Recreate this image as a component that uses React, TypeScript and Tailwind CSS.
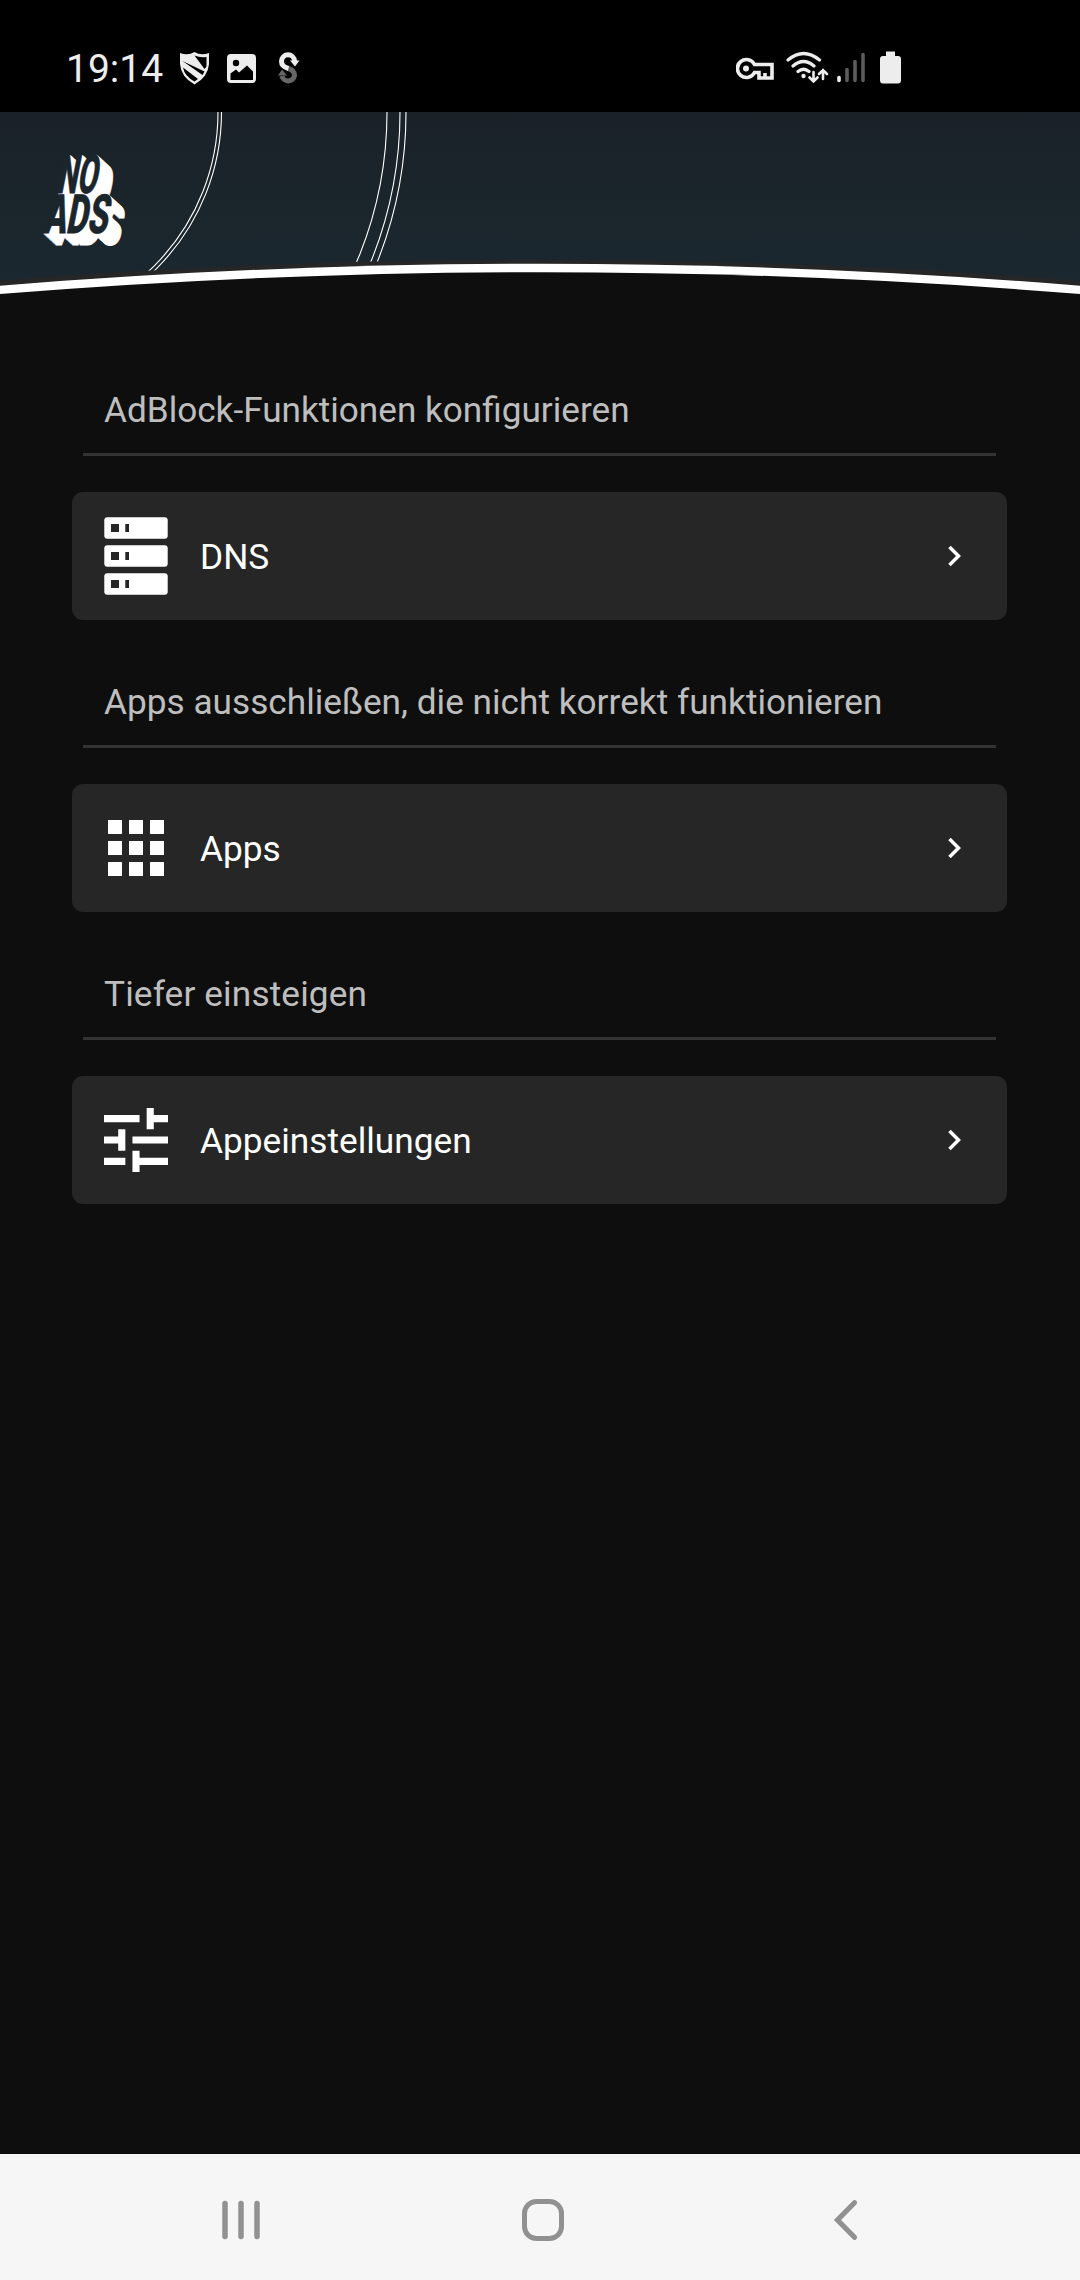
import React from "react";

const SHIFTS = [1, 2, 3, 4, 5, 6, 7, 8, 9, 10, 11, 12];

function LogoWords({ fill, strokeWidth }: { fill: string; strokeWidth: number }) {
  return (
    <g fill={fill} stroke={fill} strokeWidth={strokeWidth} fontFamily="Roboto" fontWeight="800" fontSize="54">
      <text transform="translate(56 80.500) skewX(-11)" textLength="40" lengthAdjust="spacingAndGlyphs">NO</text>
      <text transform="translate(43 120.500) skewX(-11)" textLength="64" lengthAdjust="spacingAndGlyphs">ADS</text>
    </g>
  );
}

function StatusBar() {
  return (
    <div className="flex h-[112px] shrink-0 items-start bg-black pl-[66px] text-[#ededed]">
      <div className="mt-[46px] flex h-[46px] w-[98px] items-center whitespace-nowrap text-[39px] leading-[46px]">19:14</div>
      <svg className="mt-[46px] h-[42px] w-[140px]" viewBox="164 46 140 42" fill="none">
        <path d="M180 53Q188 56 194.500 52Q201 56 209 53V64Q208 77 194.500 84.500Q181 77 180 64Z" fill="#ededed" />
        <path d="M194.500 55.500Q200 58 206.500 57V66.500L204.500 69ZM182.500 61L204.500 71.500L202.500 75ZM183 67.500L198 79L194.500 81.500Q184.500 76 183 67.500Z" fill="#000" />
        <rect x="227" y="54" width="29" height="29" rx="4" fill="#ededed" />
        <circle cx="236" cy="63" r="3.200" fill="#000" />
        <path d="M230.500 73.500L236 69.500L239 72.500L247 65.500L253 71.500V80H230.500Z" fill="#000" />
        <path d="M288 68.500Q294.500 70 294.500 75.500A6.500 6.500 0 0 1 281.800 76" stroke="#666" strokeWidth="5" />
        <path d="M278 75.500L282 69.500L287 75.500Z" fill="#666" />
        <path d="M294.500 61A6.500 6.500 0 0 0 281.500 61.500Q281.500 66.500 288.500 68.500" stroke="#ededed" strokeWidth="5" />
        <path d="M290 60.500H299.500L295 66.500Z" fill="#ededed" />
      </svg>
      <svg className="ml-[432px] mt-[46px] h-[42px] w-[170px]" viewBox="736 46 170 42" fill="none" stroke="#ededed" strokeLinecap="round">
        <path strokeLinecap="butt" strokeWidth="3.600" d="M754.500 64.500H772V78H759V72.500H754.500A9 9 0 1 1 754.500 64.500ZM765 78V73" />
        <circle cx="746" cy="68.500" r="3" fill="#ededed" stroke="none" />
        <path strokeWidth="3.200" d="M788 60Q803.500 47 819.500 60M793 66Q803.500 57 814 66M798 71.500Q803.500 67 809 71.500" />
        <circle cx="803.500" cy="76" r="2.200" fill="#ededed" stroke="none" />
        <path strokeWidth="2.600" d="M813.500 72V81M809.500 77.500L813.500 81.500L817.500 77.500M823 79V70M819 74L823 70L827 74" />
        <path strokeWidth="3.600" d="M839 77.500V80.500" />
        <path strokeWidth="3.600" stroke="#5c5c5c" d="M847 69.500V80.500M855 61.500V80.500M863 54.500V80.500" />
        <path fill="#ededed" stroke="none" d="M886 51.500H895V56H898Q901 56 901 59V80Q901 83.500 898 83.500H883Q880 83.500 880 80V59Q880 56 883 56H886Z" />
      </svg>
    </div>
  );
}

function Header() {
  return (
    <svg className="block h-[188px] w-full shrink-0" viewBox="0 0 1080 188" fill="none">
      <defs>
        <linearGradient id="sky" x1="0" y1="0" x2="0" y2="1">
          <stop offset="0" stopColor="#1a2228" />
          <stop offset="1" stopColor="#1b2830" />
        </linearGradient>
      </defs>
      <rect width="1080" height="188" fill="url(#sky)" />
      <g stroke="#fff" strokeWidth="1.100">
        <circle cx="0.500" cy="0" r="217.500" />
        <circle cx="0.500" cy="0" r="221" />
        <circle cx="0.500" cy="0" r="386.500" />
        <circle cx="0.500" cy="0" r="399.500" />
        <circle cx="0.500" cy="0" r="405.500" />
      </g>
      {SHIFTS.map((n) => (
        <g key={n} transform={`translate(${n * 1.08} ${n})`}>
          <LogoWords fill="#fff" strokeWidth={1} />
        </g>
      ))}
      <LogoWords fill="#1b252c" strokeWidth={0.8} />
      <path d="M0 168.700Q540 126.300 1080 168.700V188H0Z" fill="#262626" />
      <path d="M0 173.700Q540 129.800 1080 173.700V188H0Z" fill="#fff" />
      <path d="M0 182Q540 138.300 1080 182V188H0Z" fill="#0e0e0e" />
    </svg>
  );
}

function DnsIcon() {
  return (
    <svg className="h-[78px] w-16" viewBox="0 0 64 78">
      {[0, 28, 56].map((y) => (
        <g key={y}>
          <rect x="0.300" y={y + 0.300} width="63.400" height="21.400" rx="3" fill="#fff" />
          <path d={`M7 ${y + 7}h8v8h-8zM21.300 ${y + 7}h3.700v8h-3.700z`} fill="#262626" />
        </g>
      ))}
    </svg>
  );
}

function AppsIcon() {
  return (
    <svg className="h-14 w-16" viewBox="-4 0 64 56" fill="#fff">
      {[0, 21, 42].map((y) => [0, 21, 42].map((x) => <rect key={`${x}-${y}`} x={x} y={y} width="14" height="14" />))}
    </svg>
  );
}

function TuneIcon() {
  return (
    <svg className="h-16 w-16" viewBox="3 3 18 18" fill="#fff">
      <path d="M3 17v2h6v-2H3zM3 5v2h10V5H3zm10 16v-2h8v-2h-8v-2h-2v6h2zM7 9v2H3v2h4v2h2V9H7zm14 4v-2H11v2h10zm-6-4h2V7h4V5h-4V3h-2v6z" />
    </svg>
  );
}

function Section({ title, titleSize, label, icon }: { title: string; titleSize: string; label: string; icon: React.ReactNode }) {
  return (
    <section className="h-[292px] shrink-0">
      <div className="mx-[11px] h-[84px] border-b-[3px] border-[#333333] pl-[21px] pt-[17px]">
        <h2 className={`whitespace-nowrap leading-[42px] text-[#bebebe] ${titleSize}`}>{title}</h2>
      </div>
      <button className="mt-9 flex h-32 w-full items-center rounded-[11px] bg-[#262626] pl-8 pr-[45px] text-left text-white">
        {icon}
        <span className="ml-8 flex-1 whitespace-nowrap pt-px text-[35.25px] leading-[42px]">{label}</span>
        <svg className="h-[22px] w-[14px]" viewBox="0 0 14 22" fill="none" stroke="#fff" strokeWidth="3.500">
          <path d="M1.500 2L10.500 11L1.500 20" />
        </svg>
      </button>
    </section>
  );
}

export default function App() {
  return (
    <div className="flex h-[2280px] w-[1080px] flex-col overflow-hidden bg-[#0e0e0e] font-['Roboto',sans-serif]">
      <StatusBar />
      <Header />
      <main className="flex flex-1 flex-col pl-[72px] pr-[73px] pt-[72px]">
        <Section title="AdBlock-Funktionen konfigurieren" titleSize="text-[35.15px]" label="DNS" icon={<DnsIcon />} />
        <Section title="Apps ausschließen, die nicht korrekt funktionieren" titleSize="text-[35.23px]" label="Apps" icon={<AppsIcon />} />
        <Section title="Tiefer einsteigen" titleSize="text-[35.2px] tracking-[0.14px]" label="Appeinstellungen" icon={<TuneIcon />} />
      </main>
      <nav className="grid h-[126px] shrink-0 grid-cols-[42px_44px_26px] items-center justify-start bg-[#f6f6f6] pl-[220px] pt-[6px]">
        <svg className="h-[42px] w-[42px]" viewBox="0 0 42 42" stroke="#919191" strokeWidth="5.500" strokeLinecap="round">
          <path d="M5 4.500V37.500M21 4.500V37.500M37 4.500V37.500" />
        </svg>
        <svg className="ml-[259px] h-[44px] w-[44px]" viewBox="0 0 44 44" fill="none" stroke="#919191" strokeWidth="5">
          <rect x="3.500" y="3.500" width="37" height="37" rx="12" />
        </svg>
        <svg className="ml-[527px] h-[42px] w-[26px]" viewBox="0 0 26 42" fill="none" stroke="#919191" strokeWidth="5.200" strokeLinecap="round">
          <path d="M21.500 3.700L4.500 21L21.500 38.300" />
        </svg>
      </nav>
    </div>
  );
}
